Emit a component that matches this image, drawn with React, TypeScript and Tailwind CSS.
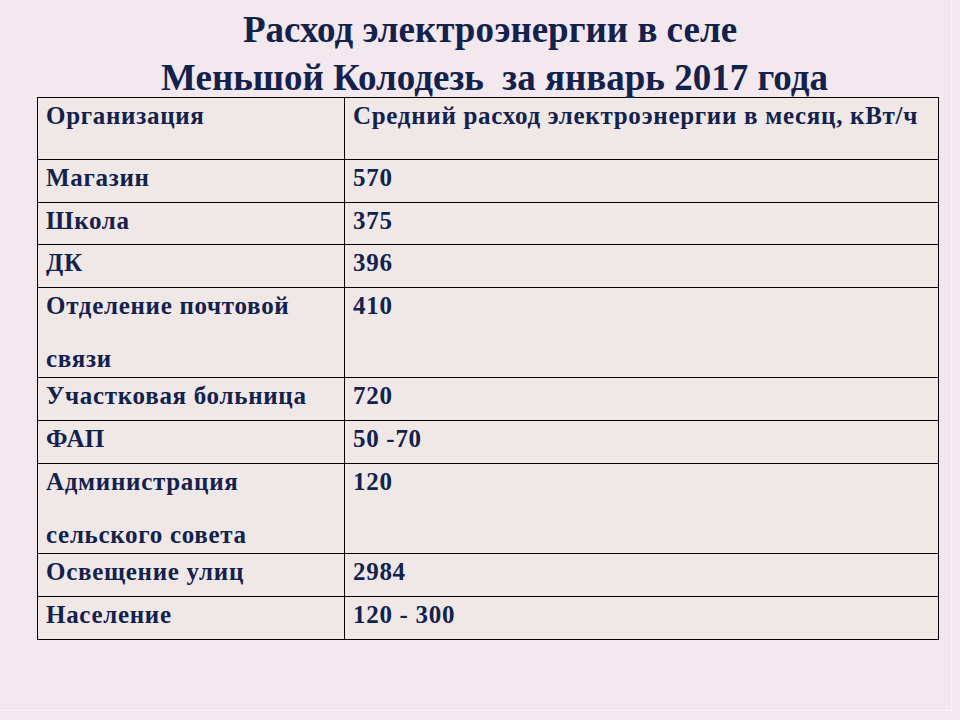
const rows: { org: string[]; value: string; h: string }[] = [
  { org: ["Магазин"], value: "570", h: "h-[43px]" },
  { org: ["Школа"], value: "375", h: "h-[42px]" },
  { org: ["ДК"], value: "396", h: "h-[43px]" },
  { org: ["Отделение почтовой", "связи"], value: "410", h: "h-[90px]" },
  { org: ["Участковая больница"], value: "720", h: "h-[43px]" },
  { org: ["ФАП"], value: "50 -70", h: "h-[43px]" },
  { org: ["Администрация", "сельского совета"], value: "120", h: "h-[90px]" },
  { org: ["Освещение улиц"], value: "2984", h: "h-[43px]" },
  { org: ["Население"], value: "120 - 300", h: "h-[43px]" },
];

function CellText({ lines }: { lines: string[] }) {
  return (
    <div className="pt-[3px]">
      {lines.map((line, i) => (
        <div key={i} className={i > 0 ? "mt-[23px] leading-[30px]" : "leading-[30px]"}>
          {line}
        </div>
      ))}
    </div>
  );
}

export default function App() {
  return (
    <div className="h-[720px] w-[960px] bg-[#f2e8ed] font-['Liberation_Serif',serif] font-bold text-[#13214d]">
      <div className="h-[711px] w-[952px] border-b border-r border-[#f9f3f7]">
        <h1 className="h-[97px] pt-[6px] text-center text-[37px] leading-[48px]">
          <div className="pl-[29px]">Расход электроэнергии в селе</div>
          <div className="pl-[38px]">Меньшой Колодезь&nbsp; за январь 2017 года</div>
        </h1>
        <div className="pl-[37px]">
          <table className="w-[902px] border-collapse bg-[#f0e7e7] text-[25px] tracking-[0.7px]">
            <tbody>
              <tr className="h-[62px] align-top">
                <td className="w-[307px] border border-black px-[8px]">
                  <CellText lines={["Организация"]} />
                </td>
                <td className="border border-black px-[8px]">
                  <CellText lines={["Средний расход электроэнергии в месяц, кВт/ч"]} />
                </td>
              </tr>
              {rows.map((row) => (
                <tr key={row.org[0]} className={`${row.h} align-top`}>
                  <td className="border border-black px-[8px]">
                    <CellText lines={row.org} />
                  </td>
                  <td className="border border-black px-[8px]">
                    <CellText lines={[row.value]} />
                  </td>
                </tr>
              ))}
            </tbody>
          </table>
        </div>
      </div>
    </div>
  );
}
